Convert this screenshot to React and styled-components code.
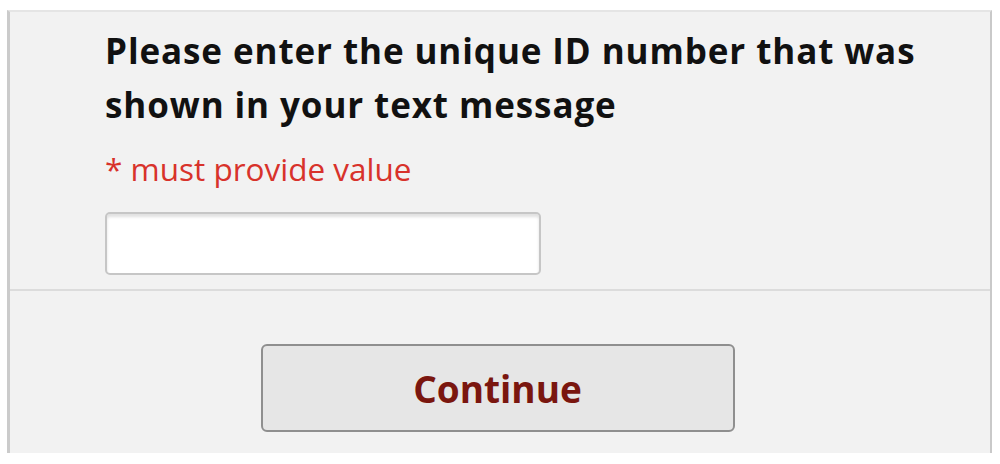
import styled, { createGlobalStyle } from 'styled-components';

const GlobalStyle = createGlobalStyle`
  body {
    margin: 0;
    background: #fff;
    font-family: "Open Sans", "Noto Sans", sans-serif;
  }
`;

export default function App() {
  return (
    <>
      <GlobalStyle />
      <Panel>
        <QuestionSection>
          <Question>
            Please enter the unique ID number that was shown in your text message
          </Question>
          <Required>* must provide value</Required>
          <IdInput type="text" aria-label="unique ID number" />
        </QuestionSection>
        <Footer>
          <ContinueButton type="button">Continue</ContinueButton>
        </Footer>
      </Panel>
    </>
  );
}

const Panel = styled.main`
  box-sizing: border-box;
  width: 985px;
  height: 443px;
  margin: 10px 0 0 7px;
  background: #f2f2f2;
  border-top: 2px solid #e5e5e5;
  border-left: 3px solid #cbcbcb;
  border-right: 2px solid #c9c9c9;
  display: flex;
  flex-direction: column;
`;

const QuestionSection = styled.section`
  box-sizing: border-box;
  height: 279px;
  padding: 12px 40px 0 95px;
  border-bottom: 2px solid #dcdcdc;
`;

const Question = styled.h1`
  margin: 0;
  max-width: 860px;
  font-size: 35px;
  line-height: 54px;
  letter-spacing: 0.9px;
  font-weight: 700;
  color: #111;
`;

const Required = styled.p`
  margin: 16px 0 0;
  font-size: 31.5px;
  line-height: 42px;
  color: #d8322b;
`;

const IdInput = styled.input`
  display: block;
  box-sizing: border-box;
  width: 436px;
  height: 63px;
  margin-top: 22px;
  border: 2px solid #c6c6c6;
  border-radius: 5px;
  background: #fff;
  box-shadow: inset 0 3px 3px rgba(0, 0, 0, 0.12);
  font-size: 26px;
  padding: 0 12px;
`;

const Footer = styled.footer`
  flex: 1;
  display: flex;
  justify-content: center;
  align-items: flex-start;
  padding-top: 53px;
`;

const ContinueButton = styled.button`
  box-sizing: border-box;
  width: 474px;
  height: 88px;
  margin-left: -5px;
  background: #e6e6e6;
  border: 2px solid #8f8f8f;
  border-radius: 6px;
  font-family: "Open Sans", "Noto Sans", sans-serif;
  font-size: 37px;
  font-weight: 700;
  color: #7a160f;
  cursor: pointer;
`;
